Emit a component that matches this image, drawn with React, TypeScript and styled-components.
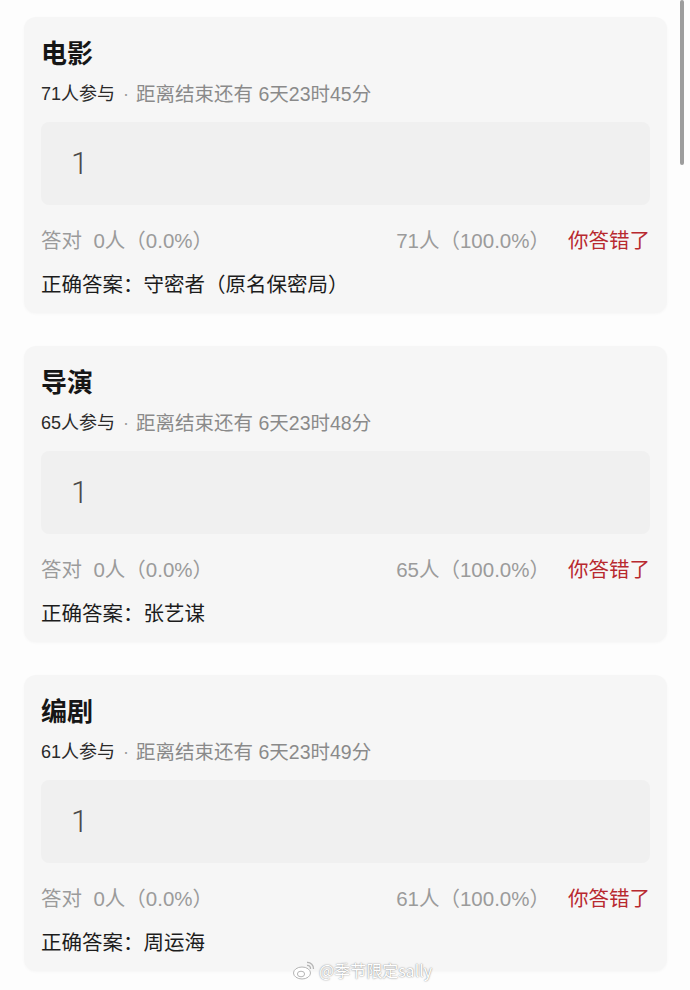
import React from "react";
import styled, { createGlobalStyle } from "styled-components";

const GlobalStyle = createGlobalStyle`
  html, body {
    margin: 0;
    padding: 0;
    background: #fdfdfd;
  }
  body {
    font-family: "Liberation Sans", "Noto Sans CJK SC", sans-serif;
    color: #1f1f1f;
  }
`;

const Page = styled.main`
  position: relative;
  width: 690px;
  height: 990px;
  overflow: hidden;
  box-sizing: border-box;
  padding: 17px 23px 0 24px;
  display: flex;
  flex-direction: column;
  gap: 33px;
`;

const Card = styled.section`
  background: #f6f6f6;
  border-radius: 12px;
  padding: 19px 17px 15px;
  display: flex;
  flex-direction: column;
  box-shadow: 0 1px 3px rgba(0, 0, 0, 0.03);
`;

const Title = styled.h2`
  margin: 0;
  font-family: "Noto Sans CJK SC", sans-serif;
  font-size: 26px;
  line-height: 32px;
  font-weight: 700;
  color: #161616;
`;

const Meta = styled.div`
  margin-top: 13px;
  font-size: 18px;
  line-height: 26px;
  color: #8a8a8a;
  display: flex;
  align-items: center;
  white-space: pre;
`;

const Count = styled.span`
  color: #2a2a2a;
`;

const Dot = styled.span`
  margin: 0 7px 0 8px;
  color: #9a9a9a;
`;

const Remain = styled.span`
  font-size: 19.5px;
`;

const AnswerBox = styled.div`
  margin-top: 15px;
  height: 83px;
  flex-shrink: 0;
  border-radius: 8px;
  background: #f0f0f0;
  display: flex;
  align-items: center;
  padding-left: 30px;
  font-family: "Roboto", "Liberation Sans", sans-serif;
  font-size: 31px;
  font-weight: 300;
  color: #4a4a4a;
`;

const Stats = styled.div`
  margin-top: 23px;
  display: flex;
  align-items: center;
  font-size: 20.5px;
  line-height: 26px;
  color: #9b9b9b;
  white-space: pre;
`;

const Spacer = styled.div`
  flex: 1;
`;

const Verdict = styled.span`
  margin-left: 18px;
  color: #b8292f;
`;

const Correct = styled.div`
  margin-top: 18px;
  font-size: 20.5px;
  line-height: 26px;
  color: #1c1c1c;
  white-space: pre;
`;

const ScrollThumb = styled.div`
  position: absolute;
  top: 0;
  right: 6px;
  width: 4px;
  height: 165px;
  border-radius: 2px;
  background: #9d9d9d;
`;

const Watermark = styled.div`
  position: absolute;
  left: 292px;
  top: 958px;
  display: flex;
  align-items: center;
  gap: 3px;
  font-family: "Noto Sans CJK SC", sans-serif;
  font-size: 16px;
  color: #ffffff;
  text-shadow: 0 0 2px rgba(0, 0, 0, 0.35), 0 0 1px rgba(0, 0, 0, 0.3);
  white-space: pre;
`;

const WeiboMark = () => (
  <svg width="24" height="22" viewBox="0 0 24 22" fill="none">
    <ellipse cx="10" cy="14" rx="8.5" ry="6" fill="#fff" stroke="#b5b5b5" strokeWidth="1" />
    <ellipse cx="9" cy="15" rx="3.6" ry="2.8" fill="none" stroke="#b5b5b5" strokeWidth="1" />
    <path d="M15 3.5 a6 6 0 0 1 6.5 6.5" stroke="#b5b5b5" strokeWidth="1.3" fill="none" />
    <path d="M15 6.5 a3 3 0 0 1 3.5 3.5" stroke="#b5b5b5" strokeWidth="1.3" fill="none" />
  </svg>
);

type Question = {
  title: string;
  people: number;
  remain: string;
  answer: string;
  right: string;
  wrong: string;
  correct: string;
};

const questions: Question[] = [
  {
    title: "电影",
    people: 71,
    remain: "6天23时45分",
    answer: "1",
    right: "0人（0.0%）",
    wrong: "71人（100.0%）",
    correct: "守密者（原名保密局）",
  },
  {
    title: "导演",
    people: 65,
    remain: "6天23时48分",
    answer: "1",
    right: "0人（0.0%）",
    wrong: "65人（100.0%）",
    correct: "张艺谋",
  },
  {
    title: "编剧",
    people: 61,
    remain: "6天23时49分",
    answer: "1",
    right: "0人（0.0%）",
    wrong: "61人（100.0%）",
    correct: "周运海",
  },
];

const QuestionCard = ({ q }: { q: Question }) => (
  <Card>
    <Title>{q.title}</Title>
    <Meta>
      <Count>{q.people}人参与</Count>
      <Dot>·</Dot>
      <Remain>距离结束还有 {q.remain}</Remain>
    </Meta>
    <AnswerBox>{q.answer}</AnswerBox>
    <Stats>
      <span>答对  {q.right}</span>
      <Spacer />
      <span>{q.wrong}</span>
      <Verdict>你答错了</Verdict>
    </Stats>
    <Correct>正确答案：{q.correct}</Correct>
  </Card>
);

export default function App() {
  return (
    <>
      <GlobalStyle />
      <Page>
        {questions.map((q) => (
          <QuestionCard key={q.title} q={q} />
        ))}
        <ScrollThumb />
        <Watermark>
          <WeiboMark />
          <span>@季节限定sally</span>
        </Watermark>
      </Page>
    </>
  );
}
